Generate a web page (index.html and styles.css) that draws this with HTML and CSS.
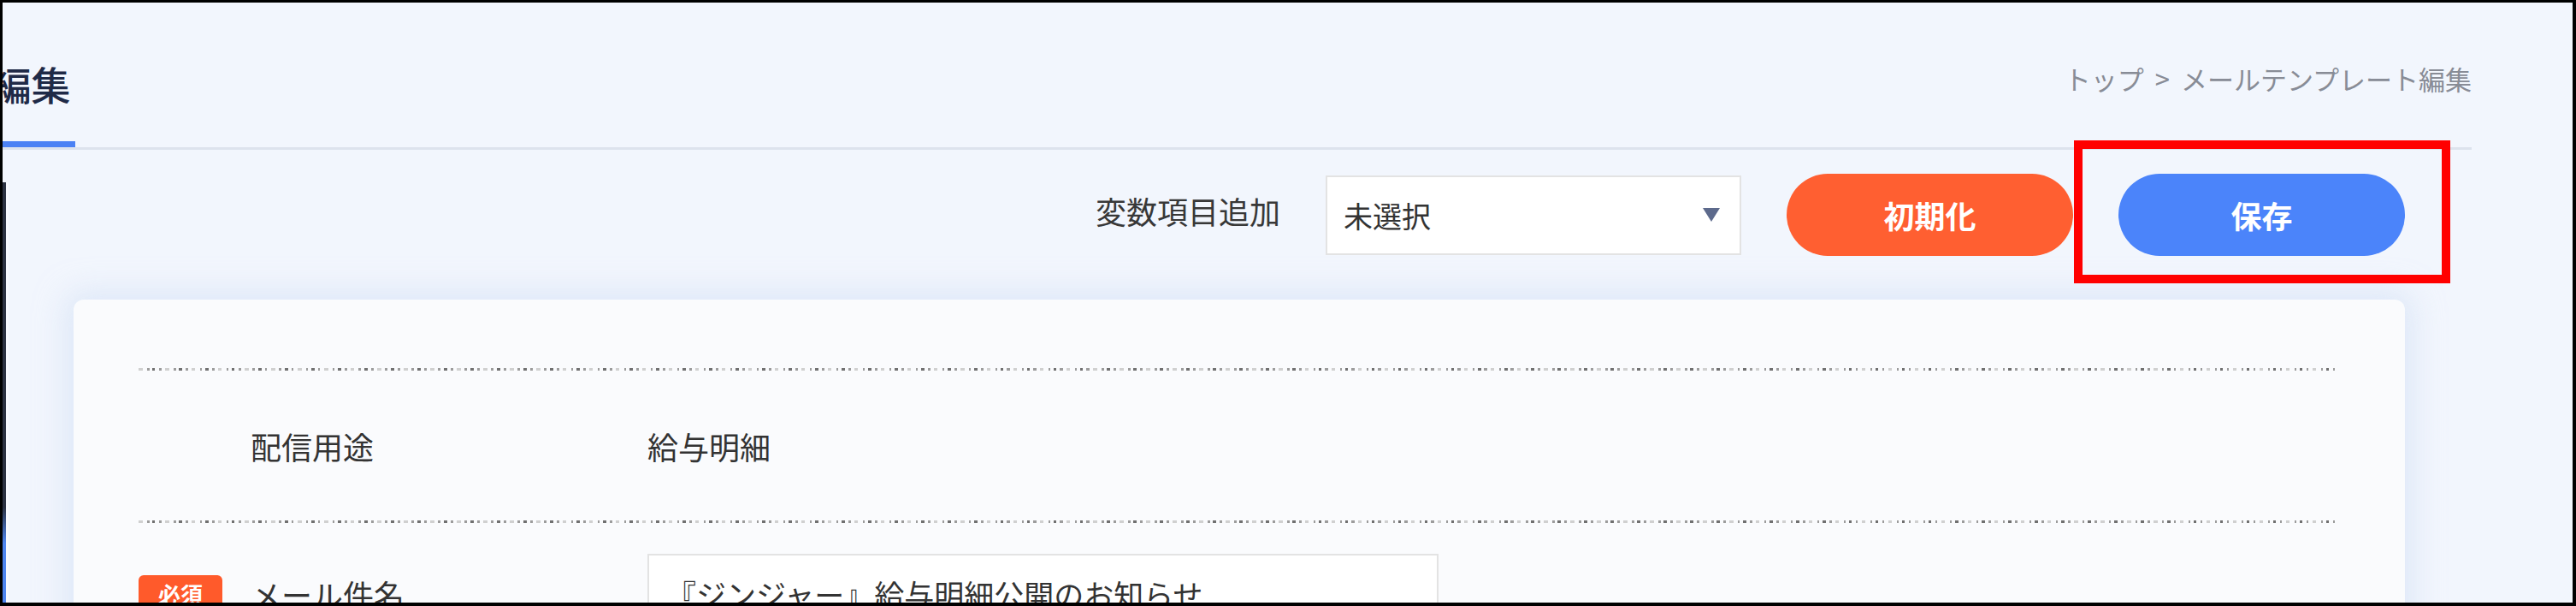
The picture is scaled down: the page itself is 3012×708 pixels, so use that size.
FILE: index.html
```html
<!DOCTYPE html>
<html lang="ja">

<head>
    <meta charset="UTF-8">
    <meta name="viewport" content="width=device-width, initial-scale=1.0">
    <title>メールテンプレート編集</title>
    <link rel="stylesheet" href="styles.css">
</head>

<body>
    <div class="frame">
        <div class="page-head">
            <h1 class="page-title">メールテンプレート編集</h1>
            <div class="breadcrumb">トップ<span class="crumb-sep">&gt;</span>メールテンプレート編集</div>
        </div>

        <div class="page-body">
            <div class="side-edge"></div>

            <div class="content">
                <div class="toolbar">
                    <span class="toolbar-label">変数項目追加</span>
                    <div class="select">
                        <span>未選択</span>
                        <svg class="select-arrow" width="20" height="16" viewBox="0 0 20 16">
                            <polygon points="0,0 20,0 10,16" fill="#5d6a8c"></polygon>
                        </svg>
                    </div>
                    <button class="btn btn-reset">初期化</button>
                    <div class="save-wrap">
                        <button class="btn btn-save">保存</button>
                        <span class="highlight"></span>
                    </div>
                </div>

                <div class="card">
                    <div class="divider"></div>
                    <div class="row">
                        <div class="row-label">
                            <span class="badge-slot"></span>
                            <span>配信用途</span>
                        </div>
                        <div class="row-value">給与明細</div>
                    </div>
                    <div class="divider"></div>
                    <div class="row row-input">
                        <div class="row-label">
                            <span class="badge-slot"><span class="badge">必須</span></span>
                            <span>メール件名</span>
                        </div>
                        <div class="text-input">『ジンジャー』給与明細公開のお知らせ</div>
                    </div>
                </div>
            </div>
        </div>
    </div>
</body>

</html>
```

FILE: styles.css
```css
body {
    margin: 0;
    background-color: #f2f6fd;
    font-family: "Noto Sans CJK JP", "Noto Sans", sans-serif;
}

.frame {
    box-sizing: border-box;
    width: 3012px;
    height: 708px;
    overflow: hidden;
    border-style: solid;
    border-color: #000;
    border-width: 3px 4px 4px 3px;
    background-color: #f2f6fd;
}

/* header: title tab + breadcrumb */
.page-head {
    display: flex;
    justify-content: space-between;
    align-items: flex-start;
    padding-top: 71px;
    margin-right: 118px;
    border-bottom: 3px solid #dde3ed;
}

.page-title {
    flex-shrink: 0;
    margin: 0 0 0 -425px;
    padding: 0 5px 45px 0;
    font-size: 46px;
    line-height: 1;
    font-weight: 500;
    color: #1f2a47;
    border-bottom: 7px solid #4c82f4;
}

.breadcrumb {
    margin-top: 2px;
    font-size: 31px;
    line-height: 1;
    color: #888c96;
}

.crumb-sep {
    margin: 0 13px;
}

.page-body {
    display: flex;
}

.side-edge {
    flex-shrink: 0;
    width: 4px;
    margin-top: 38px;
    border-right: 3px solid #f8faff;
    background: linear-gradient(to bottom, #2c3242 0%, #2c3242 72%, #4f86f0 80%, #4f86f0 100%);
}

.content {
    flex: 1;
}

.toolbar {
    display: flex;
    justify-content: flex-end;
    align-items: center;
    gap: 53px;
    margin: 28px 196px 0 0;
}

.toolbar-label {
    margin-bottom: 10px;
    font-size: 36px;
    line-height: 1;
    color: #383838;
}

.select {
    box-sizing: border-box;
    display: flex;
    justify-content: space-between;
    align-items: center;
    width: 486px;
    height: 93px;
    padding: 0 23px 0 19px;
    background-color: #fff;
    border: 2px solid #e3e3e3;
    font-size: 34px;
    color: #333;
}

.btn {
    width: 335px;
    height: 96px;
    border: none;
    border-radius: 48px;
    color: #fff;
    font-family: inherit;
    font-size: 36px;
    font-weight: 700;
}

.btn-reset {
    background-color: #ff5f31;
}

.btn-save {
    display: block;
    background-color: #4b84fa;
}

.save-wrap {
    position: relative;
}

/* red annotation frame drawn over the save button */
.highlight {
    position: absolute;
    top: -39px;
    right: -53px;
    bottom: -32px;
    left: -52px;
    border: 10px solid #ff0000;
}

.card {
    margin: 51px 196px 0 76px;
    padding: 80px 79px 0 73px;
    background-color: #fafbfd;
    border-radius: 12px;
    box-shadow: 0 0 34px 10px rgba(205, 220, 244, 0.55);
}

.divider {
    height: 3px;
    background-image: repeating-linear-gradient(90deg,
            transparent 0 2.5px,
            #d0d0d0 2.5px 7.5px,
            transparent 7.5px 12.5px,
            #9c9c9c 12.5px 15.5px,
            transparent 15.5px 19px,
            #707070 19px 22.5px,
            transparent 22.5px 26.5px,
            #9c9c9c 26.5px 29.5px,
            transparent 29.5px 31px);
}

.row {
    display: flex;
    align-items: center;
    height: 175px;
    font-size: 36px;
    line-height: 1;
    color: #333;
}

.row-input {
    height: auto;
    padding-top: 36px;
}

.row-label {
    display: flex;
    align-items: center;
    flex-shrink: 0;
    width: 598px;
}

.badge-slot {
    flex-shrink: 0;
    width: 134px;
}

.badge {
    display: flex;
    justify-content: center;
    align-items: center;
    width: 98px;
    height: 44px;
    margin-left: 3px;
    border-radius: 6px;
    background-color: #ff5a2b;
    color: #fff;
    font-size: 26px;
    font-weight: 700;
}

.text-input {
    box-sizing: border-box;
    display: flex;
    align-items: center;
    width: 925px;
    height: 93px;
    padding-left: 20px;
    background-color: #fff;
    border: 2px solid #e3e3e3;
    font-size: 35px;
    color: #333;
}
```
